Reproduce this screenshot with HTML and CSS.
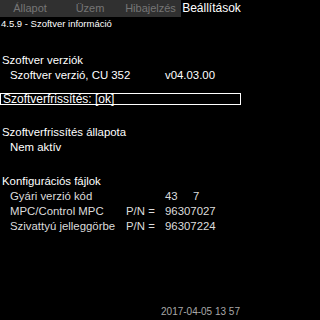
FILE: index.html
```html
<!DOCTYPE html>
<html>
<head>
<meta charset="utf-8">
<link rel="stylesheet" href="styles.css">
</head>
<body>
<div class="screen">
  <div class="tabs">
    <div class="tab">Állapot</div>
    <div class="tab">Üzem</div>
    <div class="tab">Hibajelzés</div>
    <div class="tab active">Beállítások</div>
  </div>
  <div class="crumb">4.5.9 - Szoftver információ</div>
  <div class="content">
    <div class="section s1">
      <div class="head">Szoftver verziók</div>
      <div class="row"><span class="c1 wide">Szoftver verzió, CU 352</span><span class="c3">v04.03.00</span></div>
    </div>
    <div class="selbox">Szoftverfrissítés: [ok]</div>
    <div class="section s2">
      <div class="head">Szoftverfrissítés állapota</div>
      <div class="row"><span class="c1">Nem aktív</span></div>
    </div>
    <div class="section s3">
      <div class="head">Konfigurációs fájlok</div>
      <div class="row dim"><span class="c1">Gyári verzió kód</span><span class="c2"></span><span class="c3"><span class="n1">43</span><span>7</span></span></div>
      <div class="row dim"><span class="c1">MPC/Control MPC</span><span class="c2">P/N =</span><span class="c3">96307027</span></div>
      <div class="row dim"><span class="c1">Szivattyú jelleggörbe</span><span class="c2">P/N =</span><span class="c3">96307224</span></div>
    </div>
  </div>
  <div class="footer">2017-04-05 13 57</div>
</div>
</body>
</html>
```
FILE: styles.css
```css
html, body {
  margin: 0;
  padding: 0;
  background: #000;
}
.screen {
  width: 242px;
  height: 320px;
  background: #000;
  color: #fff;
  font-family: "Liberation Sans", Arial, sans-serif;
  font-size: 11.4px;
  display: flex;
  flex-direction: column;
  overflow: hidden;
}
.tabs {
  display: flex;
  height: 17px;
  background: #303030;
}
.tab {
  width: 60px;
  text-align: center;
  line-height: 17px;
  color: #767676;
  font-size: 11px;
  white-space: nowrap;
}
.tab:nth-child(3) { width: 61px; }
.tab.active {
  width: 61px;
  background: #000;
  color: #fff;
  font-size: 12px;
}
.crumb {
  font-size: 9.5px;
  line-height: 12px;
  padding-left: 1px;
  margin-top: 1px;
}
.content {
  flex: 1;
  display: flex;
  flex-direction: column;
}
.head {
  line-height: 15px;
  padding-left: 2px;
}
.row {
  display: flex;
  line-height: 15px;
  padding-left: 10px;
  white-space: nowrap;
}
.row.dim { color: #dcdcdc; }
.c1 { width: 116px; }
.c1.wide { width: 155px; }
.c2 { width: 39px; }
.n1 { display: inline-block; width: 28px; }
.s1 { margin-top: 23px; }
.selbox {
  margin-top: 10px;
  margin-right: 1px;
  border: 1px solid #fff;
  height: 10px;
  line-height: 11px;
  padding-left: 2px;
  font-size: 12px;
}
.s2 { margin-top: 20px; }
.s3 { margin-top: 19px; }
.footer {
  color: #a8a8a8;
  text-align: right;
  font-size: 10px;
  line-height: 12px;
  padding-right: 2px;
  margin-bottom: 2px;
}
```
